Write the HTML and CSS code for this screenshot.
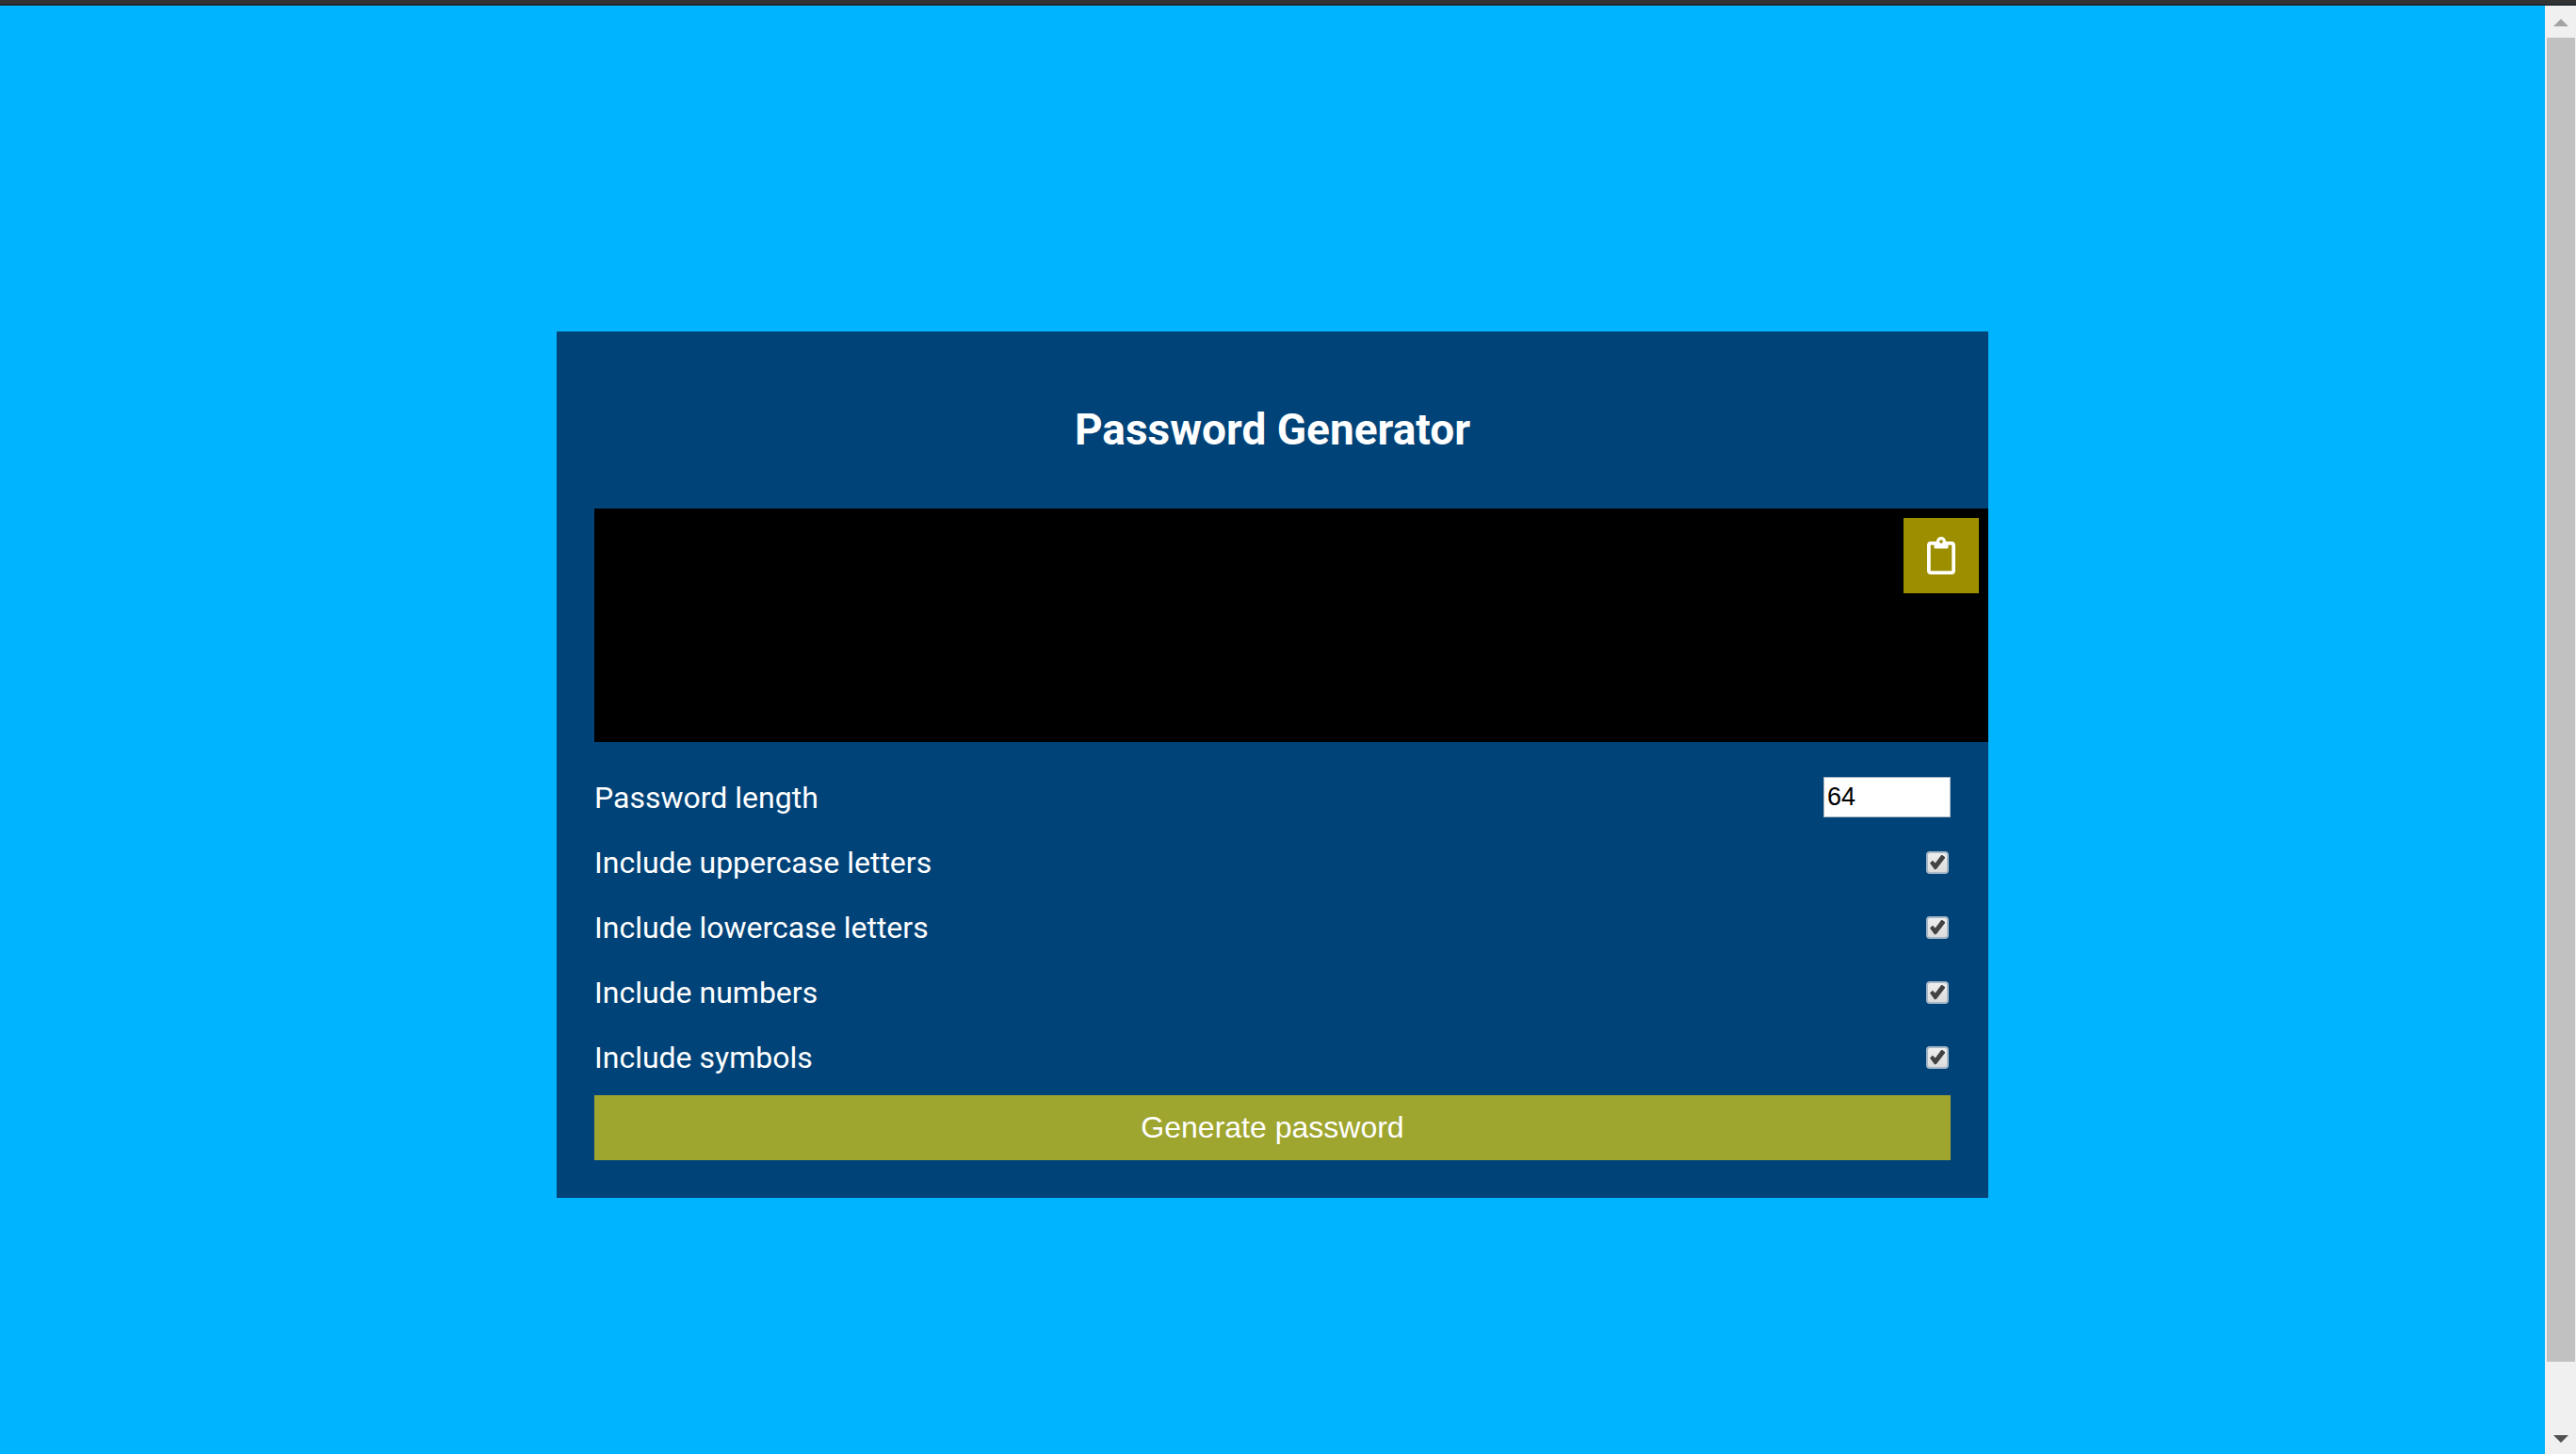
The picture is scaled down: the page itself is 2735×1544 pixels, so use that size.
FILE: index.html
```html
<!DOCTYPE html>
<html lang="en">
<head>
<meta charset="utf-8">
<title>Password Generator</title>
<link rel="stylesheet" href="styles.css">
</head>
<body>
<div class="topbar"></div>
<div class="viewport">
  <main class="page">
    <form class="card">
      <h1 class="title">Password Generator</h1>
      <div class="result">
        <output class="result-text"></output>
        <button class="copy" type="button" aria-label="Copy to clipboard">
          <svg class="copy-icon" viewBox="0 0 384 512" aria-hidden="true"><path fill="currentColor" d="M336 64h-80c0-35.300-28.700-64-64-64s-64 28.700-64 64H48C21.500 64 0 85.500 0 112v352c0 26.500 21.500 48 48 48h288c26.500 0 48-21.500 48-48V112c0-26.500-21.500-48-48-48zM192 40c13.300 0 24 10.700 24 24s-10.700 24-24 24-24-10.700-24-24 10.700-24 24-24zm144 418c0 3.300-2.700 6-6 6H54c-3.300 0-6-2.700-6-6V118c0-3.300 2.700-6 6-6h42v36c0 6.600 5.400 12 12 12h168c6.600 0 12-5.400 12-12v-36h42c3.300 0 6 2.700 6 6z"/></svg>
        </button>
      </div>
      <div class="settings">
        <div class="setting"><label for="length">Password length</label><input class="length" id="length" type="number" value="64"></div>
        <div class="setting"><label for="upper">Include uppercase letters</label><input class="check" id="upper" type="checkbox" checked></div>
        <div class="setting"><label for="lower">Include lowercase letters</label><input class="check" id="lower" type="checkbox" checked></div>
        <div class="setting"><label for="numbers">Include numbers</label><input class="check" id="numbers" type="checkbox" checked></div>
        <div class="setting"><label for="symbols">Include symbols</label><input class="check" id="symbols" type="checkbox" checked></div>
      </div>
      <button class="generate" type="button">Generate password</button>
    </form>
  </main>
  <div class="scrollbar" aria-hidden="true">
    <div class="arrow arrow-up"></div>
    <div class="track"><div class="thumb"></div></div>
    <div class="arrow arrow-down"></div>
  </div>
</div>
</body>
</html>
```
FILE: styles.css
```css
* {
  box-sizing: border-box;
}

body {
  display: flex;
  flex-direction: column;
  min-height: 100vh;
  margin: 0;
  background: #00b4ff;
  color: #fff;
  font-family: Roboto, "Liberation Sans", sans-serif;
  font-size: 32px;
}

.topbar {
  height: 6px;
  background: #333;
  border-bottom: 2px solid #222a30;
}

.viewport {
  display: flex;
  flex: 1;
}

.page {
  flex: 1;
  padding: 346px 40px 40px;
}

.card {
  max-width: 1520px;
  margin: 0 auto;
  padding: 40px;
  background: #004379;
}

.title {
  margin: 30px 0 50px;
  font-size: 46px;
  font-weight: 700;
  line-height: 68px;
  text-align: center;
}

.result {
  display: flex;
  align-items: flex-start;
  justify-content: flex-end;
  min-height: 248px;
  margin-right: -40px;
  padding: 10px;
  background: #000;
}

.result-text {
  flex: 1;
}

.copy {
  display: grid;
  place-items: center;
  width: 80px;
  height: 80px;
  padding: 0;
  border: 0;
  background: #9d8e00;
  color: #fff;
}

.copy-icon {
  width: 30px;
  height: 40px;
}

.settings {
  margin: 24px 0 6px;
}

.setting {
  display: flex;
  align-items: center;
  justify-content: space-between;
  height: 69px;
}

.length {
  width: 135px;
  height: 43px;
  padding: 0 3px;
  border: 1px solid #a9b5c0;
  background: #fff;
  color: #000;
  font-family: "Liberation Sans", sans-serif;
  font-size: 27px;
  appearance: textfield;
}

.length::-webkit-inner-spin-button {
  appearance: none;
  margin: 0;
}

.check {
  appearance: none;
  display: grid;
  place-items: center;
  width: 24px;
  height: 24px;
  margin: 0 2px;
  border: 2px solid #a6b8c8;
  border-radius: 4px;
  background: linear-gradient(#eee, #dcdcdc);
}

.check:checked::before {
  content: "";
  width: 16px;
  height: 16px;
  background: #424242;
  clip-path: polygon(0 56%, 18% 39%, 36% 57%, 78% 0, 100% 16%, 100% 24%, 44% 95%, 32% 100%);
}

.generate {
  display: block;
  width: 100%;
  height: 69px;
  padding: 0;
  border: 0;
  background: #9fa62f;
  color: #fff;
  font-family: "Liberation Sans", sans-serif;
  font-size: 32px;
}

.scrollbar {
  display: flex;
  flex-direction: column;
  width: 33px;
  padding: 14px 1px 12px 2px;
  background: #f0f0f0;
}

.arrow {
  width: 16px;
  height: 8px;
  align-self: center;
}

.arrow-up {
  background: #a3a3a3;
  clip-path: polygon(50% 0, 100% 100%, 0 100%);
}

.arrow-down {
  background: #505050;
  clip-path: polygon(0 0, 100% 0, 50% 100%);
}

.track {
  flex: 1;
  padding: 12px 0 78px;
}

.thumb {
  height: 100%;
  background: #c1c1c1;
}
```
